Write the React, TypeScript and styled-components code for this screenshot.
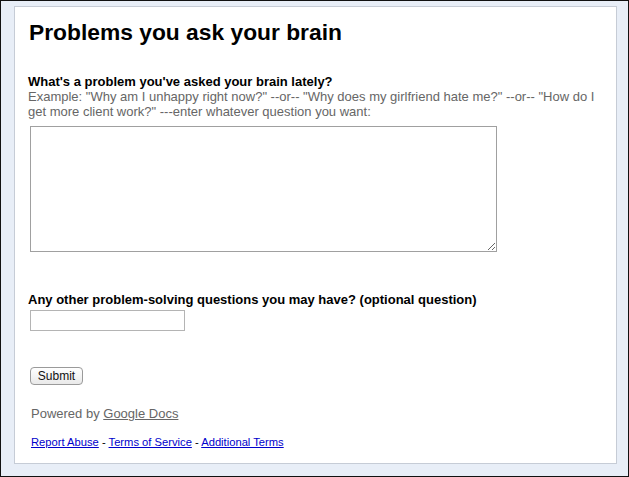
import styled, { createGlobalStyle } from "styled-components";

const GlobalStyle = createGlobalStyle`
  html, body {
    margin: 0;
    padding: 0;
    background: #000;
  }
  * {
    box-sizing: border-box;
  }
`;

const Page = styled.div`
  width: 629px;
  height: 477px;
  border: 1px solid #111;
  background: #e8eef7;
  padding: 5px 11px 0 13px;
  font-family: "Liberation Sans", Arial, sans-serif;
`;

const Card = styled.div`
  width: 603px;
  height: 458px;
  background: #fff;
  border: 1px solid #c6ccd6;
  padding: 13px 14px 0 14px;
`;

const Title = styled.h1`
  margin: 0;
  font-size: 22.8px;
  line-height: 25px;
  font-weight: bold;
  color: #000;
`;

const Question = styled.div<{ $top: number }>`
  margin-top: ${(p) => p.$top}px;
`;

const Label = styled.div`
  margin-left: -1px;
  font-size: 13px;
  line-height: 15px;
  font-weight: bold;
  color: #000;
`;

const Help = styled.div`
  margin-left: -1px;
  font-size: 13px;
  line-height: 15px;
  color: #666;
  width: 572px;
`;

const TextArea = styled.textarea`
  display: block;
  margin: 7px 0 0 1px;
  width: 467px;
  height: 126px;
  border: 1px solid #a0a0a0;
  resize: both;
  font-family: "Liberation Sans", Arial, sans-serif;
`;

const TextInput = styled.input`
  display: block;
  margin: 3px 0 0 1px;
  width: 155px;
  height: 21px;
  border: 1px solid #b4b4b4;
  padding: 0 3px;
`;

const SubmitButton = styled.button`
  display: block;
  margin: 36px 0 0 1px;
  width: 53px;
  height: 18px;
  padding: 0;
  border: 1px solid #9a9a9a;
  border-radius: 4px;
  background: linear-gradient(#ffffff, #e9e9e9);
  font-family: "Liberation Sans", Arial, sans-serif;
  font-size: 12px;
  color: #111;
`;

const Powered = styled.div`
  margin-top: 21px;
  padding-left: 2px;
  font-size: 13px;
  line-height: 15px;
  color: #666;

  a {
    color: #666;
    text-decoration: underline;
  }
`;

const Footer = styled.div`
  margin-top: 15px;
  padding-left: 2px;
  font-size: 11.2px;
  line-height: 13px;
  color: #000;

  a {
    color: #0000cc;
    text-decoration: underline;
  }
`;

export default function App() {
  return (
    <>
      <GlobalStyle />
      <Page>
        <Card>
          <Title>Problems you ask your brain</Title>
          <Question $top={29}>
            <Label>What's a problem you've asked your brain lately?</Label>
            <Help>
              Example: "Why am I unhappy right now?" --or-- "Why does my girlfriend hate me?"
              --or-- "How do I get more client work?" ---enter whatever question you want:
            </Help>
            <TextArea />
          </Question>
          <Question $top={40}>
            <Label>Any other problem-solving questions you may have? (optional question)</Label>
            <TextInput type="text" />
          </Question>
          <SubmitButton type="button">Submit</SubmitButton>
          <Powered>
            Powered by <a href="#">Google Docs</a>
          </Powered>
          <Footer>
            <a href="#">Report Abuse</a> - <a href="#">Terms of Service</a> -{" "}
            <a href="#">Additional Terms</a>
          </Footer>
        </Card>
      </Page>
    </>
  );
}
